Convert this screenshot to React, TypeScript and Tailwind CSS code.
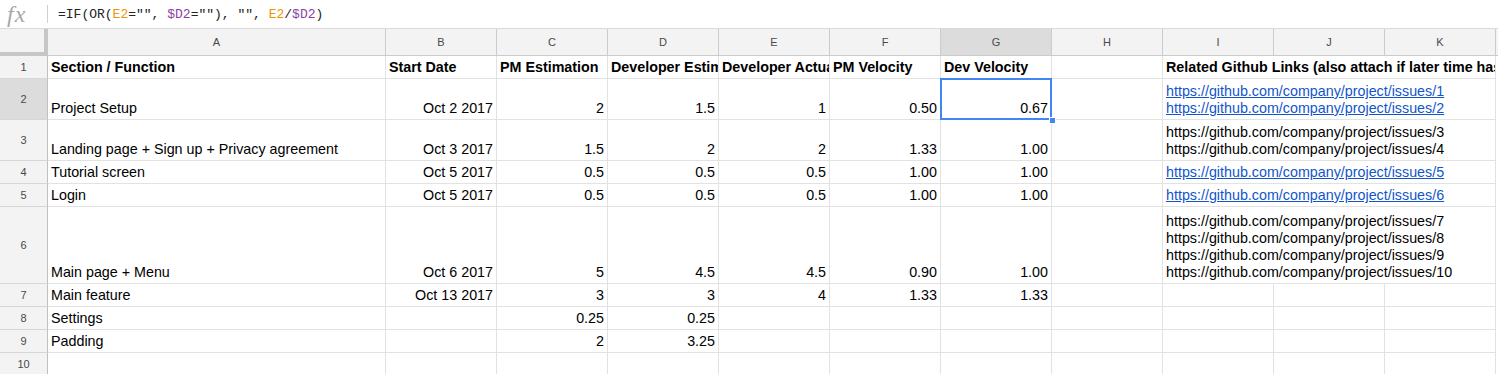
import React from "react";

type C = { t?: string; r?: boolean; b?: boolean; lines?: string[]; link?: boolean };

const grid = "border-r border-b border-[#e2e2e2]";

function Cell({ c, extra = "" }: { c: C; extra?: string }) {
  const align = c.r ? "justify-end" : "justify-start";
  if (c.lines) {
    return (
      <div className={`${grid} ${extra} min-w-0 flex flex-col justify-end items-start px-[3px] pb-[2px] whitespace-nowrap overflow-hidden`}>
        {c.lines.map((l, i) => (
          <div key={i} className={c.link ? "text-[#1155cc] underline" : "text-black"}>
            {l}
          </div>
        ))}
      </div>
    );
  }
  return (
    <div className={`${grid} ${extra} min-w-0 flex items-end ${align} px-[3px] pb-[2px] whitespace-nowrap overflow-hidden ${c.b ? "font-bold" : ""}`}>
      <span className={c.link ? "text-[#1155cc] underline" : ""}>{c.t}</span>
    </div>
  );
}

const links = (a: number, b: number) => {
  const o: string[] = [];
  for (let i = a; i <= b; i++) o.push(`https://github.com/company/project/issues/${i}`);
  return o;
};

type Row = { n: number; cells: C[]; i?: C };

const rows: Row[] = [
  {
    n: 1,
    cells: [
      { t: "Section / Function", b: true },
      { t: "Start Date", b: true },
      { t: "PM Estimation", b: true },
      { t: "Developer Estimation", b: true },
      { t: "Developer Actual", b: true },
      { t: "PM Velocity", b: true },
      { t: "Dev Velocity", b: true },
      {},
    ],
    i: { t: "Related Github Links (also attach if later time has been added)", b: true },
  },
  {
    n: 2,
    cells: [
      { t: "Project Setup" },
      { t: "Oct 2 2017", r: true },
      { t: "2", r: true },
      { t: "1.5", r: true },
      { t: "1", r: true },
      { t: "0.50", r: true },
      { t: "0.67", r: true },
      {},
    ],
    i: { lines: links(1, 2), link: true },
  },
  {
    n: 3,
    cells: [
      { t: "Landing page + Sign up + Privacy agreement" },
      { t: "Oct 3 2017", r: true },
      { t: "1.5", r: true },
      { t: "2", r: true },
      { t: "2", r: true },
      { t: "1.33", r: true },
      { t: "1.00", r: true },
      {},
    ],
    i: { lines: links(3, 4) },
  },
  {
    n: 4,
    cells: [
      { t: "Tutorial screen" },
      { t: "Oct 5 2017", r: true },
      { t: "0.5", r: true },
      { t: "0.5", r: true },
      { t: "0.5", r: true },
      { t: "1.00", r: true },
      { t: "1.00", r: true },
      {},
    ],
    i: { lines: links(5, 5), link: true },
  },
  {
    n: 5,
    cells: [
      { t: "Login" },
      { t: "Oct 5 2017", r: true },
      { t: "0.5", r: true },
      { t: "0.5", r: true },
      { t: "0.5", r: true },
      { t: "1.00", r: true },
      { t: "1.00", r: true },
      {},
    ],
    i: { lines: links(6, 6), link: true },
  },
  {
    n: 6,
    cells: [
      { t: "Main page + Menu" },
      { t: "Oct 6 2017", r: true },
      { t: "5", r: true },
      { t: "4.5", r: true },
      { t: "4.5", r: true },
      { t: "0.90", r: true },
      { t: "1.00", r: true },
      {},
    ],
    i: { lines: links(7, 10) },
  },
  {
    n: 7,
    cells: [
      { t: "Main feature" },
      { t: "Oct 13 2017", r: true },
      { t: "3", r: true },
      { t: "3", r: true },
      { t: "4", r: true },
      { t: "1.33", r: true },
      { t: "1.33", r: true },
      {},
      {},
      {},
      {},
    ],
  },
  {
    n: 8,
    cells: [{ t: "Settings" }, {}, { t: "0.25", r: true }, { t: "0.25", r: true }, {}, {}, {}, {}, {}, {}, {}],
  },
  {
    n: 9,
    cells: [{ t: "Padding" }, {}, { t: "2", r: true }, { t: "3.25", r: true }, {}, {}, {}, {}, {}, {}, {}],
  },
  { n: 10, cells: [{}, {}, {}, {}, {}, {}, {}, {}, {}, {}, {}] },
];

const letters = ["A", "B", "C", "D", "E", "F", "G", "H", "I", "J", "K"];

export default function App() {
  return (
    <div className="w-[1498px] h-[374px] overflow-hidden bg-white font-['Liberation_Sans',Arial,sans-serif] text-[14.3px] leading-[17px] text-black">
      {/* formula bar */}
      <div className="h-[29px] flex items-center border-b border-[#dadada]">
        <div className="w-[47px] h-full flex items-center pl-[7px] font-['Liberation_Serif',serif] italic text-[24px] tracking-[1px] text-[#a8a8a8]">
          fx
        </div>
        <div className="h-[18px] border-l border-[#d0d0d0]" />
        <div className="pl-[10px] font-['Liberation_Mono',monospace] text-[13px] text-[#222]">
          =IF(OR(<span className="text-[#f09300]">E2</span>="", <span className="text-[#8e3fa6]">$D2</span>=""), "", <span className="text-[#f09300]">E2</span>/<span className="text-[#8e3fa6]">$D2</span>)
        </div>
      </div>
      {/* sheet */}
      <div className="grid grid-cols-[48px_338px_repeat(10,111px)_2px] grid-rows-[27px_23px_41px_41px_23px_23px_77px_23px_23px_23px_23px]">
        <div className="bg-[#f3f3f3] border-r-[4px] border-b-[4px] border-[#c6c6c6]" />
        {letters.map((l) => (
          <div
            key={l}
            className={`flex items-center justify-center border-r border-b border-[#cbcbcb] text-[11px] text-[#4a4a4a] ${
              l === "G" ? "bg-[#dcdcdc]" : "bg-[#f3f3f3]"
            }`}
          >
            {l}
          </div>
        ))}
        <div className="border-b border-[#cbcbcb] bg-[#f3f3f3]" />
        {rows.map((row) => (
          <React.Fragment key={row.n}>
            <div
              className={`flex items-center justify-center border-r border-r-[#c0c0c0] border-b border-b-[#d6d6d6] text-[11px] text-[#4a4a4a] ${
                row.n === 2 ? "bg-[#dcdcdc]" : "bg-[#f3f3f3]"
              }`}
            >
              {row.n}
            </div>
            {row.cells.map((c, idx) =>
              row.n === 2 && idx === 6 ? (
                <div key={idx} className="relative z-10 flex min-w-0">
                  <Cell c={c} extra="flex-1" />
                  <div className="absolute left-[-1px] top-[-1px] w-[112px] h-[42px] border-2 border-[#4285f4] pointer-events-none" />
                  <div className="absolute right-[-4px] bottom-[-4px] w-[7px] h-[7px] bg-[#4285f4] border border-white" />
                </div>
              ) : (
                <Cell key={idx} c={c} />
              )
            )}
            {row.i && <Cell c={row.i} extra="col-span-3" />}
            <div />
          </React.Fragment>
        ))}
      </div>
    </div>
  );
}
